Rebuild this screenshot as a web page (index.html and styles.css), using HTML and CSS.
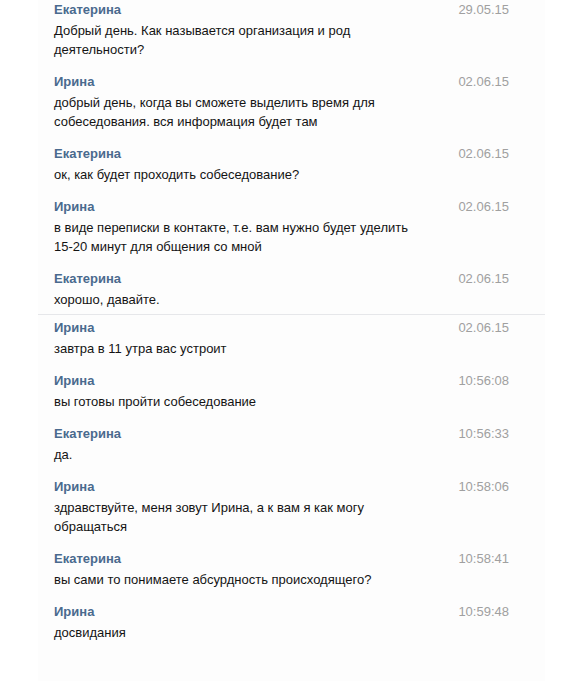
FILE: index.html
```html
<!DOCTYPE html>
<html lang="ru">
<head>
<meta charset="utf-8">
<title>Сообщения</title>
<link rel="stylesheet" href="styles.css">
</head>
<body>
<div class="panel">
  <div class="group">
    <div class="msg">
      <div class="head"><span class="name">Екатерина</span><span class="date">29.05.15</span></div>
      <div class="text">Добрый день. Как называется организация и род<br>деятельности?</div>
    </div>
    <div class="msg">
      <div class="head"><span class="name">Ирина</span><span class="date">02.06.15</span></div>
      <div class="text">добрый день, когда вы сможете выделить время для<br>собеседования. вся информация будет там</div>
    </div>
    <div class="msg">
      <div class="head"><span class="name">Екатерина</span><span class="date">02.06.15</span></div>
      <div class="text">ок, как будет проходить собеседование?</div>
    </div>
    <div class="msg">
      <div class="head"><span class="name">Ирина</span><span class="date">02.06.15</span></div>
      <div class="text">в виде переписки в контакте, т.е. вам нужно будет уделить<br>15-20 минут для общения со мной</div>
    </div>
    <div class="msg">
      <div class="head"><span class="name">Екатерина</span><span class="date">02.06.15</span></div>
      <div class="text">хорошо, давайте.</div>
    </div>
  </div>
  <div class="group">
    <div class="msg">
      <div class="head"><span class="name">Ирина</span><span class="date">02.06.15</span></div>
      <div class="text">завтра в 11 утра вас устроит</div>
    </div>
    <div class="msg">
      <div class="head"><span class="name">Ирина</span><span class="date">10:56:08</span></div>
      <div class="text">вы готовы пройти собеседование</div>
    </div>
    <div class="msg">
      <div class="head"><span class="name">Екатерина</span><span class="date">10:56:33</span></div>
      <div class="text">да.</div>
    </div>
    <div class="msg">
      <div class="head"><span class="name">Ирина</span><span class="date">10:58:06</span></div>
      <div class="text">здравствуйте, меня зовут Ирина, а к вам я как могу<br>обращаться</div>
    </div>
    <div class="msg">
      <div class="head"><span class="name">Екатерина</span><span class="date">10:58:41</span></div>
      <div class="text">вы сами то понимаете абсурдность происходящего?</div>
    </div>
    <div class="msg">
      <div class="head"><span class="name">Ирина</span><span class="date">10:59:48</span></div>
      <div class="text">досвидания</div>
    </div>
  </div>
</div>
</body>
</html>
```

FILE: styles.css
```css
html, body {
  margin: 0;
  padding: 0;
  background: #ffffff;
}
body {
  font-family: "Liberation Sans", Arial, sans-serif;
  font-size: 13px;
  color: #141414;
}
.panel {
  margin-left: 38px;
  width: 507px;
  min-height: 681px;
  background: #fdfdfd;
  box-sizing: border-box;
}
.group + .group {
  border-top: 1px solid #e6e7ea;
  padding-top: 3px;
}
.group:first-child .msg:last-child {
  padding-bottom: 5px;
}
.msg {
  padding: 0 36px 13px 16px;
}
.head {
  display: flex;
  justify-content: space-between;
  align-items: baseline;
  height: 20px;
  line-height: 20px;
  margin-bottom: 1px;
}
.name {
  font-weight: bold;
  color: #4a6a8e;
}
.date {
  color: #a0a0a0;
}
.text {
  line-height: 19px;
}
```
